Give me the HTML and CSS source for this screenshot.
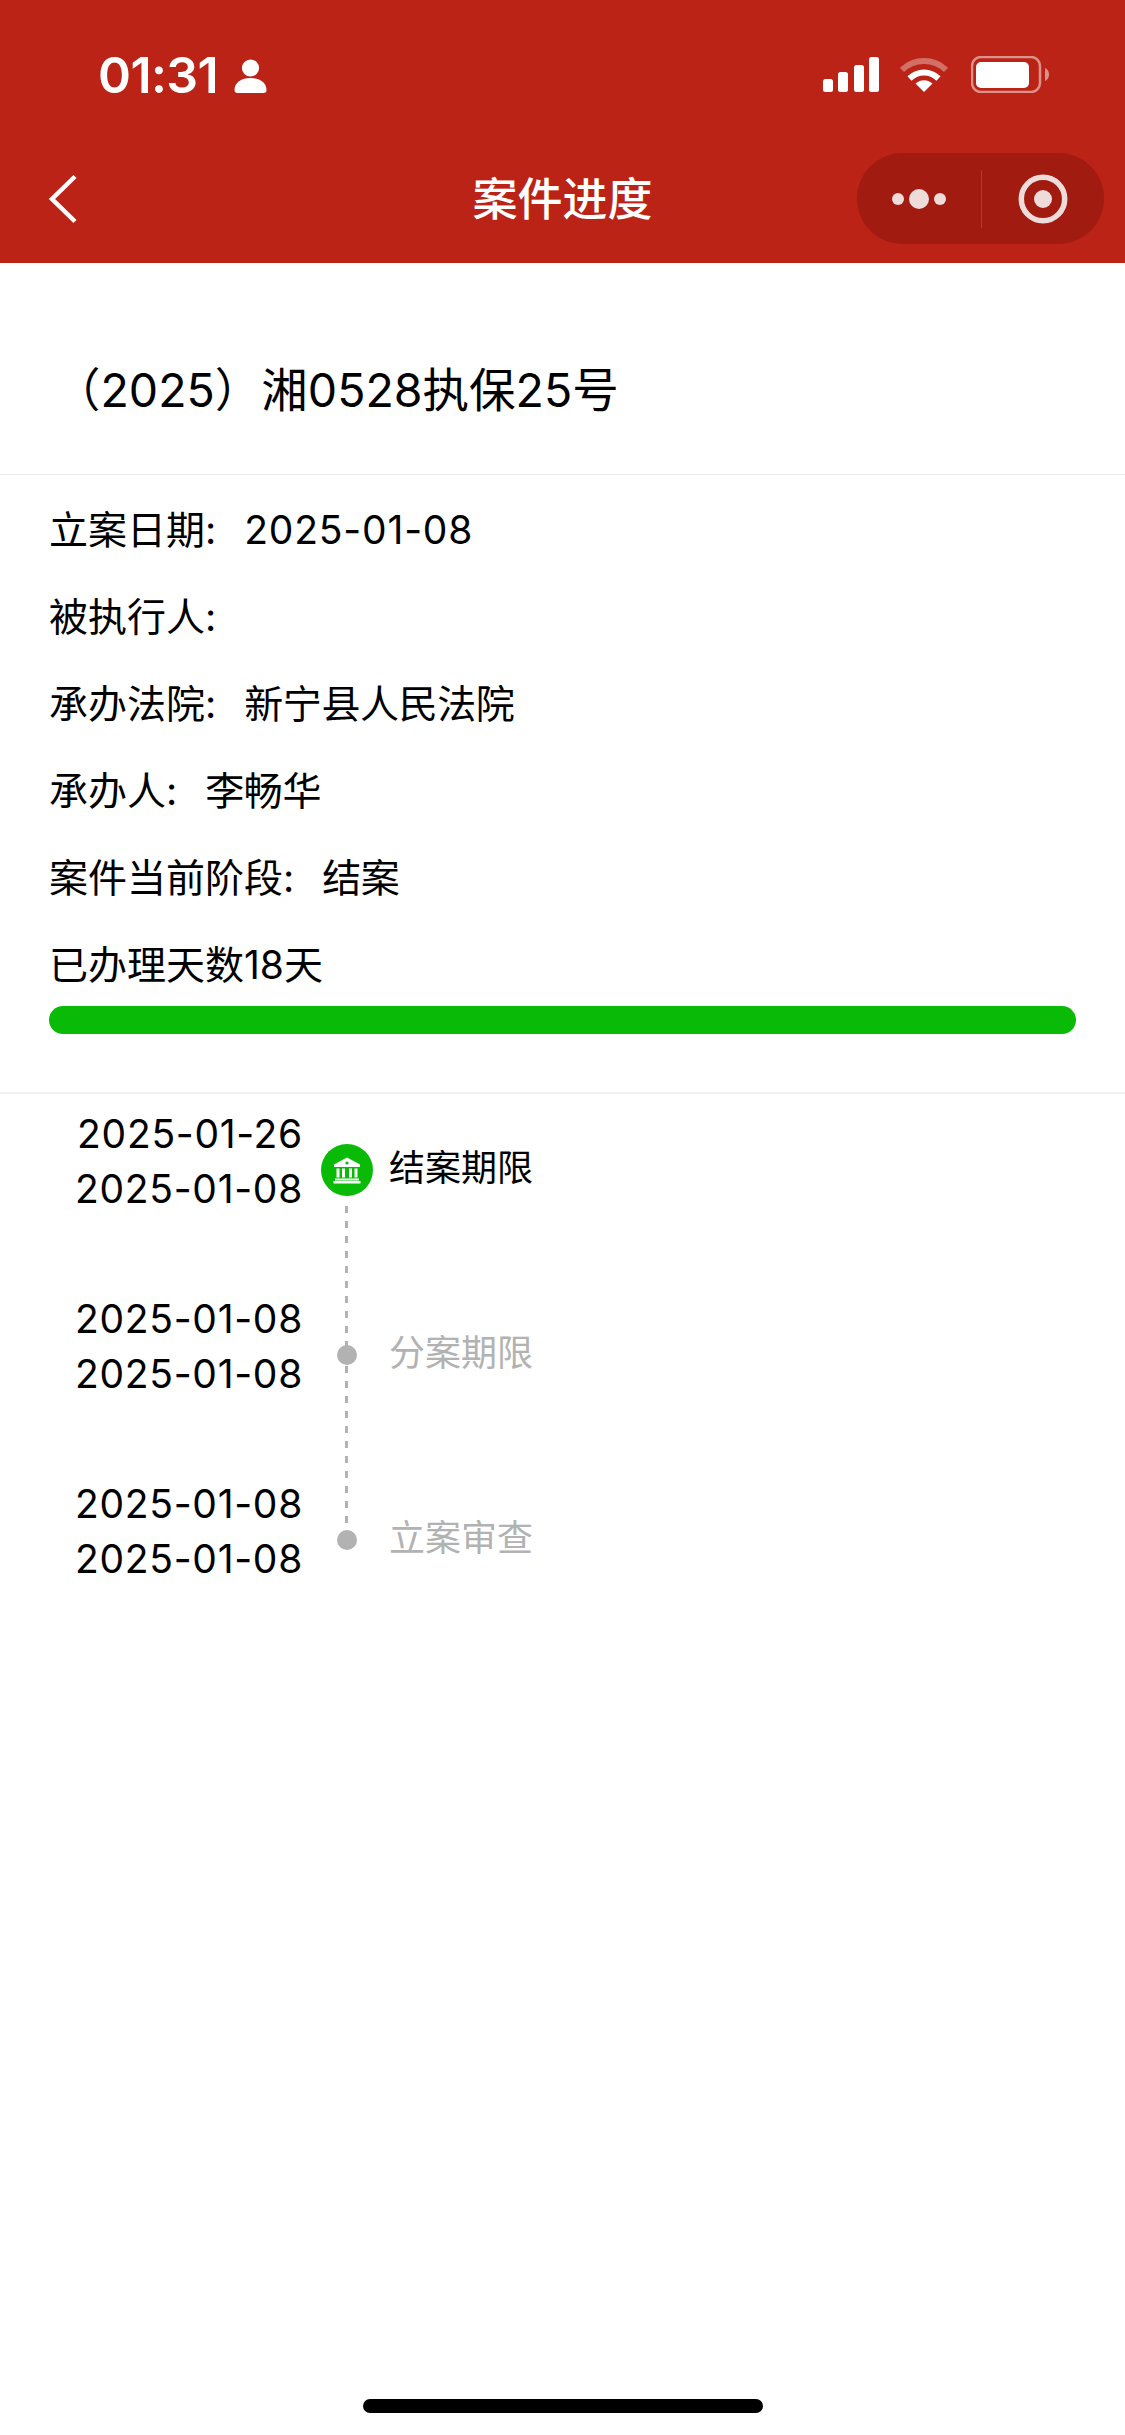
FILE: index.html
```html
<!DOCTYPE html>
<html lang="zh-CN">
<head>
<meta charset="utf-8">
<title>案件进度</title>
<link rel="stylesheet" href="styles.css">
</head>
<body>
<div class="page">
  <header class="appbar">
    <div class="status">
      <div class="status-left">
        <span class="clock">01:31</span>
        <svg class="person" viewBox="0 0 33 34"><circle cx="16.5" cy="9" r="8.6" fill="#fff"/><path d="M0.5 31c0-7.500 7-12 16-12s16 4.500 16 12c0 2-1 3-3 3H3.500c-2 0-3-1-3-3z" fill="#fff"/></svg>
      </div>
      <div class="status-right">
        <svg class="signal" viewBox="0 0 56 35"><rect x="0" y="22" width="10" height="13" rx="2.500" fill="#fff"/><rect x="15" y="15" width="10" height="20" rx="2.500" fill="#fff"/><rect x="31" y="8" width="10" height="27" rx="2.500" fill="#fff"/><rect x="46" y="0" width="10" height="35" rx="2.500" fill="#fff"/></svg>
        <svg class="wifi" viewBox="0 0 48 35"><path d="M2 13C14 1 34 1 46 13" fill="none" stroke="#fff" stroke-opacity=".35" stroke-width="6"/><path d="M9.500 21.500C18 13.500 30 13.500 38.500 21.500" fill="none" stroke="#fff" stroke-width="6"/><path d="M24 35l-8.500-8.500c5-4.500 12-4.500 17 0z" fill="#fff"/></svg>
        <svg class="battery" viewBox="0 0 78 37"><rect x="1" y="1" width="68" height="35" rx="9" fill="none" stroke="#fff" stroke-opacity=".5" stroke-width="2.500"/><rect x="5" y="6" width="53" height="26" rx="5" fill="#fff"/><path d="M74 12c2.500 1 4 3.500 4 6.500s-1.500 5.500-4 6.500z" fill="#fff" fill-opacity=".5"/></svg>
      </div>
    </div>
    <nav class="navbar">
      <svg class="back" viewBox="0 0 30 50"><path d="M27 2.500L4 25l23 22.500" fill="none" stroke="#fff" stroke-width="4.500"/></svg>
      <h1 class="nav-title">案件进度</h1>
      <div class="capsule">
        <div class="cap-more"><i class="dot"></i><i class="dot big"></i><i class="dot"></i></div>
        <div class="cap-line"></div>
        <svg class="cap-target" viewBox="0 0 50 50"><circle cx="25" cy="25" r="21.700" fill="none" stroke="#eedcda" stroke-width="5.500"/><circle cx="25" cy="25" r="9" fill="#eedcda"/></svg>
      </div>
    </nav>
  </header>

  <section class="case-head">（2025）湘0528执保25号</section>

  <section class="info">
    <p class="info-row">立案日期:<span class="val num">2025-01-08</span></p>
    <p class="info-row">被执行人:</p>
    <p class="info-row">承办法院:<span class="val">新宁县人民法院</span></p>
    <p class="info-row">承办人:<span class="val">李畅华</span></p>
    <p class="info-row">案件当前阶段:<span class="val">结案</span></p>
    <p class="info-row">已办理天数18天</p>
    <div class="progress"></div>
  </section>

  <section class="timeline">
    <div class="step current">
      <div class="dates"><div>2025-01-26</div><div>2025-01-08</div></div>
      <div class="node">
        <svg class="bank" viewBox="0 0 52 52"><circle cx="26" cy="26" r="26" fill="#09bb07"/><path d="M26 13.500l13 7v2.500H13v-2.500z" fill="#fff"/><circle cx="26" cy="19" r="1.600" fill="#09bb07"/><path d="M15.500 24.500h3v9h-3zM21 24.500h3v9h-3zM28 24.500h3v9h-3zM33.500 24.500h3v9h-3zM14 34.500h24v2H14zM12.500 37h27v2.500h-27z" fill="#fff"/></svg>
      </div>
      <div class="label">结案期限</div>
    </div>
    <div class="step">
      <div class="dates"><div>2025-01-08</div><div>2025-01-08</div></div>
      <div class="node"><i class="gray-dot"></i></div>
      <div class="label">分案期限</div>
    </div>
    <div class="step last">
      <div class="dates"><div>2025-01-08</div><div>2025-01-08</div></div>
      <div class="node"><i class="gray-dot"></i></div>
      <div class="label">立案审查</div>
    </div>
  </section>

  <div class="home-indicator"></div>
</div>
</body>
</html>
```
FILE: styles.css
```css
* { box-sizing: border-box; }
html, body { margin: 0; padding: 0; background: #fff; }
body { font-family: Inter, "Noto Sans CJK SC", "Noto Sans", sans-serif; color: #000; }
.page { width: 1125px; height: 2435px; display: flex; flex-direction: column; overflow: hidden; }

.appbar { background: #bb2316; height: 263px; color: #fff; display: flex; flex-direction: column; }
.status { height: 150px; display: flex; justify-content: space-between; padding: 56px 76px 0 98px; }
.status-left { display: flex; align-items: flex-start; gap: 16px; }
.clock { font-size: 50px; font-weight: 600; line-height: 38px; letter-spacing: -.6px; }
.person { width: 33px; height: 34px; margin-top: 3px; }
.status-right { display: flex; align-items: flex-start; }
.signal { width: 56px; height: 35px; margin-top: 1px; }
.wifi { width: 48px; height: 35px; margin: 1px 23px 0 21px; }
.battery { width: 78px; height: 37px; }

.navbar { height: 113px; display: flex; align-items: center; justify-content: space-between; padding: 0 21px 16px 48px; position: relative; }
.back { width: 30px; height: 50px; }
.nav-title { position: absolute; left: 0; right: 0; top: 14px; margin: 0; text-align: center; font-size: 45px; font-weight: 500; line-height: 72px; }
.capsule { width: 247px; height: 91px; border-radius: 46px; background: #a11b11; display: flex; align-items: center; padding-left: 35px; }
.cap-more { width: 54px; display: flex; align-items: center; justify-content: space-between; }
.dot { width: 12px; height: 12px; border-radius: 50%; background: #eedcda; }
.dot.big { width: 20px; height: 20px; }
.cap-line { width: 1px; height: 58px; margin-left: 35px; background: #b23a30; }
.cap-target { width: 50px; height: 50px; margin-left: 36px; }

.case-head { height: 212px; padding: 87px 0 0 54px; font-size: 46.500px; line-height: 80px; border-bottom: 1px solid #e9e9ee; }

.info { height: 619px; padding: 11px 49px 0; border-bottom: 2px solid #f1f1f6; }
.info-row { margin: 0; height: 87px; font-size: 39px; line-height: 87px; white-space: nowrap; }
.val { margin-left: 28px; letter-spacing: -.4px; }
.val.num { letter-spacing: .8px; }
.progress { height: 28px; margin-top: -2px; border-radius: 14px; background: #09bb07; }

.timeline { padding-top: 13px; }
.step { height: 185px; display: flex; position: relative; align-items: flex-start; }
.dates { width: 303px; text-align: right; font-size: 39px; line-height: 55px; letter-spacing: .7px; margin-top: -1px; }
.node { width: 88px; height: 110px; display: flex; align-items: center; justify-content: center; flex: none; position: relative; margin-top: -6px; padding-top: 28px; }
.bank { width: 52px; height: 52px; display: block; }
.gray-dot { width: 20px; height: 20px; border-radius: 50%; background: #b2b2b2; display: block; }
.step::after { content: ""; position: absolute; left: 345px; top: 74px; bottom: -63px; width: 3px; background: repeating-linear-gradient(to bottom, #b2b2b2 0 7px, transparent 7px 15px); }
.step.current::after { top: 99px; }
.step.last::after { display: none; }
.label { font-size: 36px; line-height: 60px; padding-top: 31px; margin-left: -2px; color: #b2b2b2; }
.step.current .label { color: #000; }

.home-indicator { width: 400px; height: 14px; border-radius: 7px; background: #000; margin: auto auto 22px; }
```
